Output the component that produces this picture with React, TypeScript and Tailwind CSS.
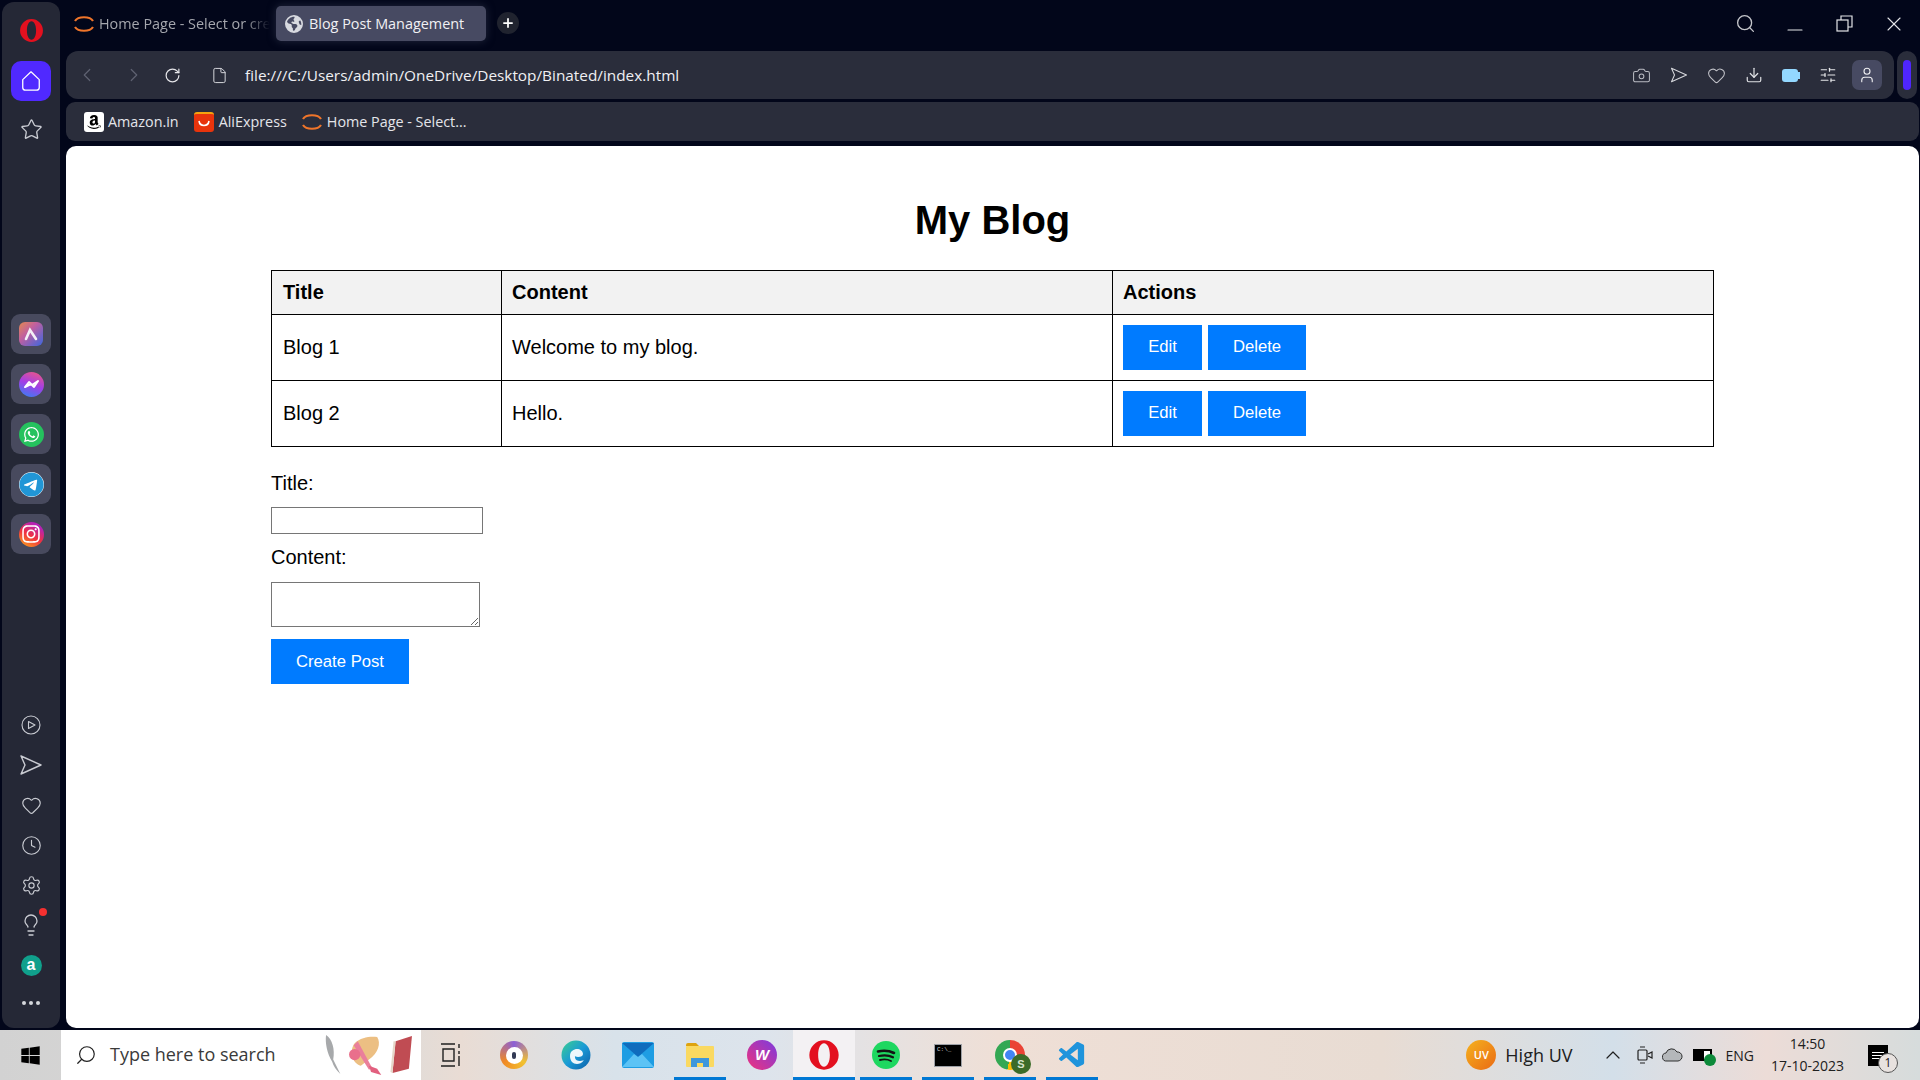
import { useId } from "react";
import {
  Camera,
  ChevronLeft,
  ChevronRight,
  ChevronUp,
  Clock,
  Download,
  File,
  Heart,
  Lightbulb,
  Minus,
  Plus,
  RotateCw,
  Search,
  Settings,
  SlidersHorizontal,
  Star,
  User,
  X,
} from "lucide-react";
import { FaEarthAmericas, FaFacebookMessenger, FaInstagram, FaTelegram, FaWhatsapp, FaWindows } from "react-icons/fa6";
import { FaAmazon } from "react-icons/fa";
import { VscVscode } from "react-icons/vsc";

function OperaLogo({ size = 24 }: { size?: number }) {
  return (
    <svg width={size} height={size} viewBox="0 0 24 24">
      <path fillRule="evenodd" fill="#e3101f" d="M12 1a11 11 0 1 0 0 22 11 11 0 0 0 0-22zm0 2.2c2.6 0 4.4 3.8 4.4 8.8s-1.8 8.8-4.4 8.8-4.4-3.8-4.4-8.8 1.8-8.8 4.4-8.8z" />
    </svg>
  );
}

function ArcLogo() {
  return (
    <svg width="20" height="20" viewBox="0 0 20 20" fill="none" stroke="#f0752a" strokeWidth="2.2">
      <path d="M1 7c3-5 15-5 18 0" />
      <path d="M1 13c3 5 15 5 18 0" />
    </svg>
  );
}

function SendArrow({ size = 22 }: { size?: number }) {
  return (
    <svg width={size} height={size} viewBox="0 0 24 24" fill="none" stroke="currentColor" strokeWidth="1.4" strokeLinejoin="round">
      <path d="M2 3l20 9-20 9 4-9z" />
    </svg>
  );
}

function RailIcon({ children }: { children: React.ReactNode }) {
  return <div className="flex h-[40px] w-[40px] items-center justify-center rounded-[9px] bg-[#484a5e]">{children}</div>;
}

function Sidebar() {
  return (
    <aside className="flex w-[58px] flex-col items-center rounded-[12px] bg-[#252836] text-[#c9cbd2]">
      <div className="mt-[16px]">
        <OperaLogo size={25} />
      </div>
      <div className="mt-[18px] flex h-[40px] w-[40px] items-center justify-center rounded-[10px] bg-[#5029ff] text-white">
        <svg width="22" height="22" viewBox="0 0 24 24" fill="none" stroke="currentColor" strokeWidth="1.4" strokeLinejoin="round">
          <path d="M3 10.5L12 2l9 8.5V19a3 3 0 0 1-3 3H6a3 3 0 0 1-3-3z" />
        </svg>
      </div>
      <div className="mt-[17px]">
        <Star size={23} strokeWidth={1.4} />
      </div>

      <div className="mt-[173px] flex flex-col gap-[10px]">
        <RailIcon>
          <div className="flex h-[24px] w-[24px] items-center justify-center rounded-[6px] bg-[linear-gradient(135deg,#e5894f,#c05fa0_40%,#3b67e0)]">
            <svg width="14" height="14" viewBox="0 0 14 14" fill="none" stroke="#f4f0f6" strokeWidth="2.6" strokeLinecap="round">
              <path d="M2 12l4-9 6 9" />
            </svg>
          </div>
        </RailIcon>
        <RailIcon>
          <div className="flex h-[25px] w-[25px] items-center justify-center rounded-full bg-[linear-gradient(200deg,#f2597c,#a33ee6_50%,#2d86f5)] text-white">
            <FaFacebookMessenger size={25} className="text-transparent" />
            <svg className="absolute" width="15" height="10" viewBox="0 0 15 10" fill="none" stroke="#fff" strokeWidth="2" strokeLinejoin="round">
              <path d="M1 8l4-5 3 3 6-4-4 6-3-3z" />
            </svg>
          </div>
        </RailIcon>
        <RailIcon>
          <div className="flex h-[25px] w-[25px] items-center justify-center rounded-full bg-[#25c25e] text-white">
            <FaWhatsapp size={17} />
          </div>
        </RailIcon>
        <RailIcon>
          <div className="flex h-[25px] w-[25px] items-center justify-center rounded-full bg-white text-[#2196d6]">
            <FaTelegram size={25} />
          </div>
        </RailIcon>
        <RailIcon>
          <div className="flex h-[25px] w-[25px] items-center justify-center rounded-full bg-[linear-gradient(30deg,#fcb017,#f0323f_45%,#b721b6_80%)] text-white">
            <FaInstagram size={20} />
          </div>
        </RailIcon>
      </div>

      <div className="mt-auto flex flex-col items-center">
        <div className="flex h-[40px] items-center">
          <svg width="20" height="20" viewBox="0 0 20 20" fill="none" stroke="currentColor" strokeWidth="1.1" strokeLinejoin="round">
            <circle cx="10" cy="10" r="9" />
            <path d="M7.5 6.5L14 10l-6.5 3.5z" />
          </svg>
        </div>
        <div className="flex h-[40px] items-center">
          <SendArrow size={24} />
        </div>
        <div className="flex h-[40px] items-center">
          <Heart size={21} strokeWidth={1.3} />
        </div>
        <div className="flex h-[40px] items-center">
          <Clock size={21} strokeWidth={1.3} />
        </div>
        <div className="flex h-[40px] items-center">
          <Settings size={21} strokeWidth={1.3} />
        </div>
        <div className="relative flex h-[40px] items-center">
          <Lightbulb size={24} strokeWidth={1.3} />
          <span className="absolute right-[-4px] top-[3px] h-[8px] w-[8px] rounded-full bg-[#f43030]" />
        </div>
        <div className="flex h-[40px] items-center">
          <div className="flex h-[21px] w-[21px] items-center justify-center rounded-full bg-[#10a08c] text-[16px] font-bold leading-none text-white [font-family:'Liberation_Sans',sans-serif]">a</div>
        </div>
        <div className="mb-[8px] flex h-[35px] items-center gap-[3px]">
          <span className="h-[4px] w-[4px] rounded-full bg-[#d5d7dc]" />
          <span className="h-[4px] w-[4px] rounded-full bg-[#d5d7dc]" />
          <span className="h-[4px] w-[4px] rounded-full bg-[#d5d7dc]" />
        </div>
      </div>
    </aside>
  );
}

function TabStrip() {
  return (
    <div className="flex h-[51px] items-start text-[14.4px] [font-family:'Open_Sans',sans-serif]">
      <div className="flex h-[47px] w-[210px] items-center pl-[8px]">
        <ArcLogo />
        <span className="ml-[5px] w-[171px] overflow-hidden whitespace-nowrap text-[#a5a7ae] [mask-image:linear-gradient(to_right,black_85%,transparent)]">Home Page - Select or create</span>
      </div>
      <div className="mt-[6px] flex h-[35px] w-[210px] items-center rounded-[5px] bg-[#474a62] pl-[9px] text-[#f1f1f4] shadow-[0_0_8px_rgba(70,74,98,0.5)]">
        <FaEarthAmericas size={18} className="text-[#d8dae0]" />
        <span className="ml-[6px]">Blog Post Management</span>
      </div>
      <div className="ml-[11px] mt-[12px] flex h-[22px] w-[22px] items-center justify-center rounded-full bg-[#20232f] text-white">
        <Plus size={14} strokeWidth={3} />
      </div>
      <div className="ml-auto flex h-[47px] items-center text-[#e4e5e8]">
        <Search size={21} strokeWidth={1.5} className="text-[#c4c5ca]" />
        <Minus size={24} strokeWidth={1.1} className="ml-[27px] mt-[12px]" />
        <svg className="ml-[29px]" width="17" height="17" viewBox="0 0 17 17" fill="none" stroke="currentColor" strokeWidth="1.2">
          <rect x="1" y="5" width="11" height="11" />
          <path d="M5 5V1h11v11h-4" />
        </svg>
        <X size={24} strokeWidth={1.1} className="ml-[29px] mr-[14px]" />
      </div>
    </div>
  );
}

function AddressBar() {
  return (
    <div className="flex h-[48px] gap-[3px]">
      <div className="flex flex-1 items-center rounded-[12px] bg-[#2a2d3b] pl-[10px] text-[#d7d8dd]">
        <ChevronLeft size={22} strokeWidth={1.3} className="text-[#5f6272]" />
        <ChevronRight size={22} strokeWidth={1.3} className="ml-[25px] text-[#5f6272]" />
        <RotateCw size={17} strokeWidth={1.7} className="ml-[19px] text-[#e6e6ea]" />
        <File size={17} strokeWidth={1.4} className="ml-[30px]" />
        <span className="ml-[17px] pt-[1px] text-[15.35px] text-[#f0f0f3] [font-family:'Open_Sans',sans-serif]">file:///C:/Users/admin/OneDrive/Desktop/Binated/index.html</span>
        <div className="ml-auto flex items-center gap-[19px] pr-[12px]">
          <Camera size={19} strokeWidth={1.3} className="text-[#babcc3]" />
          <SendArrow size={18} />
          <Heart size={19} strokeWidth={1.3} className="text-[#c2c3c9]" />
          <Download size={18} strokeWidth={1.6} className="text-[#e0e1e5]" />
          <div className="flex items-center">
            <span className="h-[13px] w-[16px] rounded-[3px] bg-[#93d8ff]" />
            <span className="h-[7px] w-[2px] bg-[#93d8ff]" />
          </div>
          <SlidersHorizontal size={18} strokeWidth={1.6} className="text-[#e6e7ea]" />
          <div className="-ml-[4px] flex h-[30px] w-[30px] items-center justify-center rounded-[7px] bg-[#474a62] text-[#eeeef1]">
            <User size={18} strokeWidth={1.5} />
          </div>
        </div>
      </div>
      <div className="mr-[3px] flex w-[20px] items-center justify-center rounded-[10px] bg-[#2a2d3b]">
        <span className="h-[30px] w-[8px] rounded-full bg-[#4f26ff]" />
      </div>
    </div>
  );
}

function BookmarksBar() {
  return (
    <div className="mr-[1px] mt-[3px] flex h-[39px] items-center rounded-[9px] bg-[#2a2d3b] pl-[18px] text-[14.35px] text-[#e4e5ea] [font-family:'Open_Sans',sans-serif]">
      <div className="flex h-[20px] w-[20px] items-center justify-center rounded-[3px] bg-white text-black">
        <FaAmazon size={16} />
      </div>
      <span className="ml-[4px]">Amazon.in</span>
      <div className="ml-[15px] flex h-[20px] w-[20px] items-end justify-center rounded-[3px] border-t-2 border-[#f5a30f] bg-[#e8340c] pb-[5px]">
        <svg width="12" height="7" viewBox="0 0 12 7" fill="none" stroke="#fff" strokeWidth="1.6">
          <path d="M1 1c1 6 9 6 10 0" />
        </svg>
      </div>
      <span className="ml-[5px]">AliExpress</span>
      <div className="ml-[15px]">
        <ArcLogo />
      </div>
      <span className="ml-[5px]">Home Page - Select...</span>
    </div>
  );
}

function BlueButton({ label, wide, lift }: { label: string; wide: string; lift: string }) {
  return <button className={`h-[45px] bg-[#007bff] text-[16.67px] text-white ${lift} ${wide}`}>{label}</button>;
}

const cell = "border border-black text-left";

function BlogPage() {
  return (
    <main className="flex flex-1 flex-col items-center rounded-[10px] bg-white pt-[51px] text-[20px] text-black [font-family:'Liberation_Sans',sans-serif]">
      <h1 className="text-[40px] font-bold leading-[46px]">My Blog</h1>
      <table className="mt-[27px] w-[1443px] table-fixed border-collapse">
        <thead>
          <tr className="h-[44px] bg-[#f2f2f2]">
            <th className={`${cell} w-[230px] pb-[2px] pl-[11px]`}>Title</th>
            <th className={`${cell} w-[611px] pb-[2px] pl-[10px]`}>Content</th>
            <th className={`${cell} pb-[2px] pl-[10px]`}>Actions</th>
          </tr>
        </thead>
        <tbody>
          {[
            ["Blog 1", "Welcome to my blog."],
            ["Blog 2", "Hello."],
          ].map(([title, body]) => (
            <tr key={title} className="h-[66px]">
              <td className={`${cell} pb-[2px] pl-[11px]`}>{title}</td>
              <td className={`${cell} pb-[2px] pl-[10px]`}>{body}</td>
              <td className={`${cell} pl-[10px]`}>
                <div className="flex gap-[6px]">
                  <BlueButton label="Edit" wide="w-[79px]" lift="pb-[2px]" />
                  <BlueButton label="Delete" wide="w-[98px]" lift="pb-[2px]" />
                </div>
              </td>
            </tr>
          ))}
        </tbody>
      </table>
      <form className="flex w-[1443px] flex-col items-start">
        <label className="mt-[25px] leading-[23px]">Title:</label>
        <input className="mt-[12px] h-[27px] w-[212px] border border-[#767676]" />
        <label className="mt-[12px] leading-[23px]">Content:</label>
        <textarea className="mt-[13px] h-[45px] w-[209px] border border-[#767676]" />
        <div className="mt-[12px]">
          <BlueButton label="Create Post" wide="w-[138px]" lift="pb-0" />
        </div>
      </form>
    </main>
  );
}

function TaskSlot({ children, running, active }: { children: React.ReactNode; running?: boolean; active?: boolean }) {
  return (
    <div className={`relative flex h-full w-[62px] items-center justify-center ${active ? "bg-[#f3f1f3]" : ""}`}>
      {children}
      {running ? <span className={`absolute bottom-0 h-[3px] bg-[#0078d4] ${active ? "inset-x-0" : "inset-x-[5px]"}`} /> : null}
    </div>
  );
}

function BrowserTaskIcon() {
  return (
    <div className="flex h-[28px] w-[28px] items-center justify-center rounded-full bg-[conic-gradient(#8c5fd6,#f2c230_35%,#f08a24_65%,#8c5fd6)]">
      <div className="flex h-[17px] w-[17px] items-center justify-center rounded-full bg-white">
        <span className="h-[7px] w-[4px] rounded-full bg-[#333a55]" />
      </div>
    </div>
  );
}

function EdgeTaskIcon() {
  const gid = useId();
  return (
    <svg width="30" height="30" viewBox="0 0 30 30">
      <defs>
        <linearGradient id={gid} x1="0" y1="0" x2="1" y2="1">
          <stop offset="0" stopColor="#3bd08f" />
          <stop offset="0.5" stopColor="#1a9ad6" />
          <stop offset="1" stopColor="#0c5ea8" />
        </linearGradient>
      </defs>
      <circle cx="15" cy="15" r="14.5" fill={`url(#${gid})`} />
      <path d="M9 16c0-5 4-7 7-7s6 2 6 5c0 2-2 3-5 3-2 0-3-1-3-1s-1 5 5 5c2 0 4-1 4-1-2 3-5 4-7 4-4 0-7-3-7-8z" fill="#fff" opacity="0.92" />
    </svg>
  );
}

function MailTaskIcon() {
  return (
    <svg width="32" height="26" viewBox="0 0 32 26">
      <rect width="32" height="26" y="0" rx="2" fill="#1e9de3" />
      <path d="M0 1l16 14L32 1z" fill="#0f6cbd" />
      <path d="M0 25l12-13 4 3 4-3 12 13z" fill="#5cc3f5" />
    </svg>
  );
}

function FilesTaskIcon() {
  return (
    <svg width="28" height="24" viewBox="0 0 28 24">
      <path d="M0 2a2 2 0 0 1 2-2h8l3 3H0z" fill="#dea30f" />
      <rect y="3" width="28" height="21" rx="1" fill="#fad961" />
      <path d="M5 24v-9h18v9h-6v-4h-6v4z" fill="#3e97dc" />
    </svg>
  );
}

function SpotifyTaskIcon() {
  return (
    <svg width="28" height="28" viewBox="0 0 28 28" fill="none" stroke="#141414" strokeLinecap="round">
      <circle cx="14" cy="14" r="14" fill="#1ed760" stroke="none" />
      <path d="M6 10.5c6-1.5 11-1 16 1.5" strokeWidth="2.6" />
      <path d="M7 15c5-1.2 10-.8 14 1.3" strokeWidth="2.2" />
      <path d="M8 19c4-.9 8-.6 11 1" strokeWidth="1.8" />
    </svg>
  );
}

function TerminalTaskIcon() {
  return (
    <div className="flex h-[23px] w-[28px] items-start border border-[#9da0a6] bg-black pl-[2px] pt-[2px]">
      <span className="text-[6px] leading-none text-[#cfd0d3] [font-family:'Liberation_Mono',monospace]">C:\_</span>
    </div>
  );
}

function ChromeTaskIcon() {
  return (
    <div className="relative h-[30px] w-[30px]">
      <div className="flex h-[30px] w-[30px] items-center justify-center rounded-full bg-[conic-gradient(#ea4335_0_120deg,#fbbc04_120deg_190deg,#34a853_190deg_360deg)]">
        <div className="h-[14px] w-[14px] rounded-full border-2 border-white bg-[#4285f4]" />
      </div>
      <div className="absolute bottom-[-4px] right-[-6px] flex h-[20px] w-[20px] items-center justify-center rounded-full bg-[#3b6b28] text-[11px] font-bold text-[#d6e3cc] [font-family:'Liberation_Sans',sans-serif]">S</div>
    </div>
  );
}

function SearchArt() {
  return (
    <svg className="mr-[7px]" width="90" height="43" viewBox="0 0 88 42">
      <path d="M2 2c6 4 9 14 7 24l7 14c-4-4-7-8-8-12C3 20 1 10 2 2z" fill="#a7a9ab" />
      <path d="M30 10c6-6 16-7 22-6 4 6 1 16-8 22l-8 6c-8-2-12-14-6-22z" fill="#ecbf83" />
      <path d="M33 8l14 26-3 2-15-24z" fill="#ea7f9b" />
      <circle cx="30" cy="21" r="5.5" fill="#e96f8c" />
      <path d="M44 32l8 3 4 6-10-3z" fill="#e2607f" />
      <path d="M70 8l16-5-3 32-16 4z" fill="#c04c53" />
      <path d="M70 8l-3 31-2-1 3-30z" fill="#e5d6c8" />
    </svg>
  );
}

function Taskbar() {
  return (
    <footer className="flex h-[50px] items-stretch bg-[linear-gradient(90deg,#d2d2d2_0%,#dddbd9_20%,#e9dcd4_24%,#d8e2ea_32%,#dde4ec_40%,#efdfd6_52%,#e8dcd3_72%,#d3dfe9_84%,#ecdcd7_92%,#d6dcdc_100%)] text-[#202020] [font-family:'Open_Sans',sans-serif]">
      <div className="flex w-[61px] items-center justify-center">
        <FaWindows size={21} className="text-black" />
      </div>
      <div className="flex w-[360px] items-center justify-between bg-white pb-[1px]">
        <div className="flex items-center">
          <Search size={22} strokeWidth={1.3} className="ml-[14px] -scale-x-100" />
          <span className="ml-[13px] text-[18px] text-[#3a3a3a]">Type here to search</span>
        </div>
        <SearchArt />
      </div>
      <div className="flex h-full">
        <TaskSlot>
          <svg className="-ml-[3px]" width="20" height="24" viewBox="0 0 20 24" fill="none" stroke="#202020" strokeWidth="1.4">
            <path d="M0 1h14M0 23h14M2 6h11v12H2zM18 1v4M18 8v3M18 13v10" />
          </svg>
        </TaskSlot>
        <TaskSlot>
          <BrowserTaskIcon />
        </TaskSlot>
        <TaskSlot>
          <EdgeTaskIcon />
        </TaskSlot>
        <TaskSlot>
          <MailTaskIcon />
        </TaskSlot>
        <TaskSlot running>
          <FilesTaskIcon />
        </TaskSlot>
        <TaskSlot>
          <div className="flex h-[30px] w-[30px] items-center justify-center rounded-full bg-[linear-gradient(45deg,#f0327c,#7a3be0)] text-[15px] font-bold italic text-white [font-family:'Liberation_Sans',sans-serif]">W</div>
        </TaskSlot>
        <TaskSlot running active>
          <OperaLogo size={32} />
        </TaskSlot>
        <TaskSlot running>
          <SpotifyTaskIcon />
        </TaskSlot>
        <TaskSlot running>
          <TerminalTaskIcon />
        </TaskSlot>
        <TaskSlot running>
          <ChromeTaskIcon />
        </TaskSlot>
        <TaskSlot running>
          <VscVscode size={31} className="text-[#1f94dc]" />
        </TaskSlot>
      </div>
      <div className="ml-auto flex items-center">
        <div className="flex h-[30px] w-[30px] items-center justify-center rounded-full bg-[linear-gradient(135deg,#f5b21f,#ea6a14)] text-[11px] font-semibold text-white">UV</div>
        <span className="ml-[9px] text-[18px]">High UV</span>
        <ChevronUp size={24} strokeWidth={1.2} className="ml-[28px]" />
        <svg className="ml-[12px]" width="16" height="18" viewBox="0 0 16 18" fill="none" stroke="#202020" strokeWidth="1.2">
          <rect x="1" y="4" width="9" height="10" rx="1" />
          <path d="M11 8l4-2v6l-4-2M3 1h5M3 17h5" />
        </svg>
        <svg className="ml-[9px]" width="21" height="14" viewBox="0 0 21 14" fill="#b4b7ba" stroke="#303030">
          <path d="M5 13a4 4 0 0 1-1-8 6 6 0 0 1 11-1 4.5 4.5 0 0 1 1 9z" />
        </svg>
        <div className="relative ml-[10px] h-[12px] w-[19px] border-2 border-black bg-white">
          <span className="block h-full w-[60%] bg-black" />
          <span className="absolute bottom-[-7px] right-[-6px] h-[12px] w-[12px] rounded-full bg-[#0d8a3a]" />
        </div>
        <span className="ml-[14px] text-[14px]">ENG</span>
        <div className="ml-[16px] flex w-[75px] flex-col items-center text-[14px] leading-[22px]">
          <span>14:50</span>
          <span>17-10-2023</span>
        </div>
        <div className="relative ml-[23px] mr-[32px] flex h-[21px] w-[20px] flex-col items-center justify-center gap-[2px] bg-black">
          <span className="h-[1px] w-[12px] bg-white" />
          <span className="h-[1px] w-[12px] bg-white" />
          <span className="h-[1px] w-[12px] bg-white" />
          <span className="absolute bottom-[-7px] right-[-10px] flex h-[20px] w-[20px] items-center justify-center rounded-full border border-[#555] bg-[#e8e2df] text-[12px]">1</span>
        </div>
      </div>
    </footer>
  );
}

export default function App() {
  return (
    <div className="flex h-screen w-full flex-col overflow-hidden bg-[#02061a]">
      <div className="flex min-h-0 flex-1 pb-[2px] pl-[2px] pt-[2px]">
        <Sidebar />
        <div className="ml-[6px] flex min-w-0 flex-1 flex-col">
          <div className="-mt-[2px]">
            <TabStrip />
          </div>
          <AddressBar />
          <BookmarksBar />
          <div className="mr-[1px] mt-[5px] flex min-h-0 flex-1">
            <BlogPage />
          </div>
        </div>
      </div>
      <Taskbar />
    </div>
  );
}
